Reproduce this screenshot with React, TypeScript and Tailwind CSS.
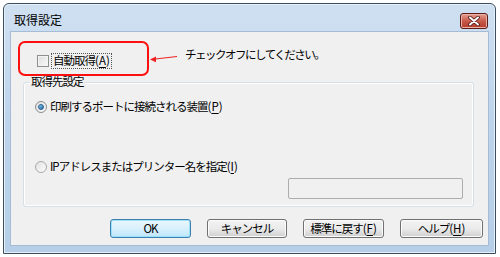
import React from 'react';

const FONT = 'font-["Noto_Sans_CJK_JP","Noto_Sans",sans-serif] [font-variant-east-asian:proportional-width]';
const JP = 'text-[11.5px] tracking-[-1px] leading-none';

function Btn({ w, focused, children }: { w: string; focused?: boolean; children: React.ReactNode }) {
  return (
    <div
      className={`${w} h-[19px] flex items-center justify-center rounded-[3px] border ${JP} ${
        focused
          ? 'border-[#3c7fb1] bg-gradient-to-b from-[#eaf6fd] via-[#d9f0fc] to-[#bee6fd] shadow-[inset_0_0_0_1px_#9ee2fa]'
          : 'border-[#707070] bg-gradient-to-b from-[#f2f2f2] via-[#ebebeb] to-[#cfcfcf] shadow-[inset_0_0_0_1px_#fcfcfc]'
      }`}
    >
      {children}
    </div>
  );
}

// access key, e.g. (A) with the letter underlined
const K = ({ c }: { c: string }) => (
  <span className="tracking-normal">
    (<span className="underline underline-offset-2">{c}</span>)
  </span>
);

export default function App() {
  return (
    <div className={`w-[500px] h-[257px] bg-white pt-[3px] pl-[3px] ${FONT} text-black`}>
      <div className="w-[493px] h-[251px] rounded-t-[6px] border border-[#3d4e5f] bg-gradient-to-b from-[#cfe0f1] via-[#bcd3eb] to-[#b7cee8] px-[6px] pb-[7px] flex flex-col shadow-[inset_0_0_0_1px_#e6f0fa]">
        <div className="h-[27px] flex items-start justify-between">
          <span className="text-[12px] leading-none pt-[10px] pl-[4px]">取得設定</span>
          <div className="mt-[9px] mr-[1px] w-[28px] h-[16px] rounded-[3px] border border-[#5b1c16] bg-gradient-to-b from-[#e3a093] via-[#c8594a] to-[#b53b2c] flex items-center justify-center shadow-[inset_0_0_0_1px_#e9b1a7]">
            <svg width="12" height="10" viewBox="0 0 12 10">
              <path d="M2 1.5 L10 8.5 M10 1.5 L2 8.5" stroke="#4a1410" strokeWidth="3.6" strokeLinecap="round" />
              <path d="M2 1.5 L10 8.5 M10 1.5 L2 8.5" stroke="#ffffff" strokeWidth="2" strokeLinecap="round" />
            </svg>
          </div>
        </div>
        <div className="relative flex-1 bg-[#f0f0f0] border border-[#a6bcd6] flex flex-col">
          {/* annotation */}
          <div className="absolute left-[7px] top-[9px] w-[131px] h-[35px] rounded-[7px] border-2 border-[#ff1010]" />
          <svg className="absolute left-[136px] top-[20px]" width="32" height="12" viewBox="0 0 32 12">
            <path d="M4 7.5 L30 4.5" stroke="#ee2020" strokeWidth="1" />
            <path d="M3 7.6 L9 4.5 L9 10.2 Z" fill="#ee2020" />
          </svg>
          <span className="absolute left-[174px] top-[17px] text-[11.5px] tracking-[-1.5px] leading-none">
            チェックオフにしてください。
          </span>

          <div className="pl-[26px] pt-[21px] h-[50px] flex items-start">
            <div className="flex items-center gap-[2px]">
              <div className="w-[12px] h-[12px] border border-[#8e8f8f] bg-gradient-to-br from-[#dcdcdc] to-[#fbfbfb] shadow-[inset_0_0_0_1px_#f4f4f4]" />
              <span className={`${JP} px-[1px] py-[1px] border border-dotted border-[#555]`}>
                自動取得<K c="A" />
              </span>
            </div>
          </div>

          <div className="relative ml-[12px] w-[451px] h-[125px] rounded-[3px] border border-[#d5dfe5] shadow-[inset_0_0_0_1px_#ffffff] flex flex-col px-[11px]">
            <span className={`absolute left-[6px] -top-[7px] bg-[#f0f0f0] px-[1px] ${JP}`}>取得先設定</span>
            <div className="mt-[17px] flex items-center gap-[3px] h-[14px]">
              <div className="w-[12px] h-[12px] rounded-full border border-[#8c8c8c] bg-gradient-to-br from-[#dedede] to-[#fafafa] flex items-center justify-center">
                <div className="w-[6px] h-[6px] rounded-full bg-gradient-to-br from-[#8ed1f7] to-[#1469a6] border border-[#2b5c8a]" />
              </div>
              <span className={JP}>印刷するポートに接続される装置<K c="P" /></span>
            </div>
            <div className="mt-[46px] flex items-center gap-[3px] h-[14px]">
              <div className="w-[12px] h-[12px] rounded-full border border-[#a9a9a9] bg-gradient-to-br from-[#e2e2e2] to-[#fbfbfb]" />
              <span className={JP}>IPアドレスまたはプリンター名を指定<K c="I" /></span>
            </div>
            <div className="mt-[4px] self-end w-[175px] h-[21px] border border-[#adadad] bg-[#f0f0f0] rounded-[2px] mr-[-1px]" />
          </div>

          <div className="pl-[99px] pt-[12px] flex gap-[16px]">
            <Btn w="w-[81px]" focused>OK</Btn>
            <Btn w="w-[80px]">キャンセル</Btn>
            <Btn w="w-[81px]">標準に戻す<K c="F" /></Btn>
            <Btn w="w-[83px]">ヘルプ<K c="H" /></Btn>
          </div>
        </div>
      </div>
    </div>
  );
}
